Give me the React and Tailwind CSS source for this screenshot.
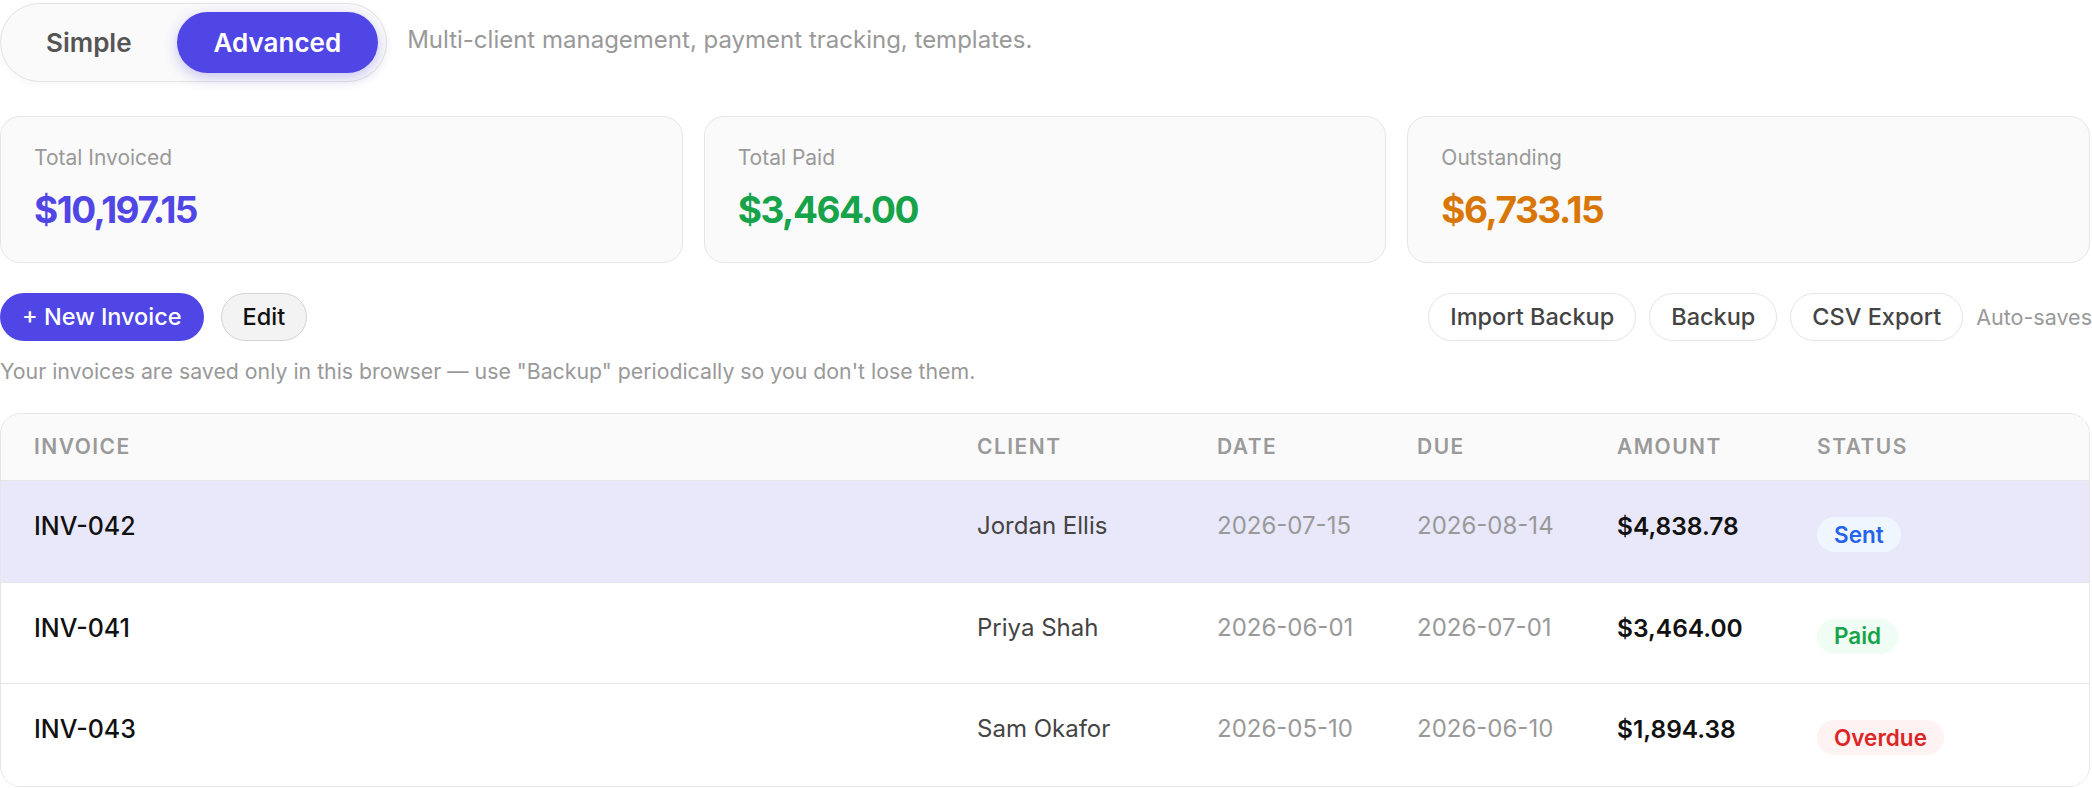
const invoices = [
  { id: 'INV-042', client: 'Jordan Ellis', date: '2026-07-15', due: '2026-08-14', amount: '$4,838.78', status: 'Sent', active: true },
  { id: 'INV-041', client: 'Priya Shah', date: '2026-06-01', due: '2026-07-01', amount: '$3,464.00', status: 'Paid' },
  { id: 'INV-043', client: 'Sam Okafor', date: '2026-05-10', due: '2026-06-10', amount: '$1,894.38', status: 'Overdue' },
]

const badgeStyles = {
  Sent: 'bg-[#eff6ff] text-[#2563eb]',
  Paid: 'bg-[#f0fdf4] text-[#16a34a]',
  Overdue: 'bg-[#fef2f2] text-[#dc2626]',
}

const StatCard = ({ label, value, color }) => (
  <div className="h-[147px] rounded-[20px] border-[1.5px] border-[#e6e6e6] bg-[#fafafa] px-[33px] pt-[25px]">
    <div className="text-[21px] leading-[32px] text-[#999]">{label}</div>
    <div className={`mt-[14px] text-[37px] leading-[44px] font-bold tracking-[-0.04em] ${color}`}>{value}</div>
  </div>
)

const App = () => {
  return (
    <div className="w-[2092px] h-[788px] overflow-hidden bg-white font-['Inter',sans-serif]">
      {/* Mode toggle */}
      <div className="flex items-center gap-[20px] pt-[3px]">
        <div className="flex gap-[8px] rounded-full border-[1.5px] border-[#e3e3e3] bg-[#fafafa] p-[8px] shadow-[0_2px_8px_rgba(0,0,0,0.04)]">
          <button className="h-[61px] rounded-full px-[37px] text-[26px] font-semibold text-[#555]">Simple</button>
          <button className="h-[61px] rounded-full bg-[#4f46e5] px-[37px] text-[26px] font-semibold text-white shadow-[0_4px_14px_rgba(79,70,229,0.3)]">
            Advanced
          </button>
        </div>
        <p className="text-[24px] text-[#999] -mt-[6px]">Multi-client management, payment tracking, templates.</p>
      </div>

      {/* Totals */}
      <div className="mt-[34px] grid grid-cols-3 gap-[21px] pr-[2px]">
        <StatCard label="Total Invoiced" value="$10,197.15" color="text-[#4f46e5]" />
        <StatCard label="Total Paid" value="$3,464.00" color="text-[#16a34a]" />
        <StatCard label="Outstanding" value="$6,733.15" color="text-[#d97706]" />
      </div>

      {/* Actions */}
      <div className="mt-[30px] flex items-center justify-between">
        <div className="flex gap-[17px]">
          <button className="h-[48px] rounded-full bg-[#4f46e5] px-[22px] text-[23.5px] font-medium text-white">+ New Invoice</button>
          <button className="h-[48px] rounded-full border-[1.5px] border-[#d4d4d4] bg-[#f3f3f3] px-[21px] text-[23.5px] font-medium text-[#111]">
            Edit
          </button>
        </div>
        <div className="flex items-center gap-[13px]">
          <button className="h-[48px] rounded-full border-[1.5px] border-[#e5e5e5] bg-white px-[21px] text-[23.5px] font-medium text-[#444]">
            Import Backup
          </button>
          <button className="h-[48px] rounded-full border-[1.5px] border-[#e5e5e5] bg-white px-[21px] text-[23.5px] font-medium text-[#444]">
            Backup
          </button>
          <button className="h-[48px] rounded-full border-[1.5px] border-[#e5e5e5] bg-white px-[21px] text-[23.5px] font-medium text-[#444]">
            CSV Export
          </button>
          <span className="whitespace-nowrap text-[21.5px] text-[#999]">Auto-saves</span>
        </div>
      </div>

      <p className="mt-[15px] text-[21.3px] leading-[30px] text-[#999]">
        Your invoices are saved only in this browser — use "Backup" periodically so you don't lose them.
      </p>

      {/* Invoice table */}
      <div className="mt-[27px] mr-[2px] overflow-hidden rounded-[21px] border-[1.5px] border-[#e6e6e6]">
        <div className="grid h-[67px] grid-cols-[943px_240px_200px_200px_200px_1fr] items-center border-b-[1.5px] border-[#e6e6e6] bg-[#fafafa] pl-[33px] text-[21px] font-semibold uppercase tracking-[0.07em] text-[#9a9a9a]">
          <div>Invoice</div>
          <div>Client</div>
          <div>Date</div>
          <div>Due</div>
          <div>Amount</div>
          <div>Status</div>
        </div>
        {invoices.map((inv, i) => (
          <div
            key={inv.id}
            className={`grid h-[101.5px] grid-cols-[943px_240px_200px_200px_200px_1fr] items-start pl-[33px] pt-[28px] ${
              inv.active ? 'bg-[#e9e8fa]' : 'bg-white'
            } ${i < invoices.length - 1 ? 'border-b-[1.5px] border-[#e6e6e6]' : ''}`}
          >
            <div className="text-[25px] leading-[34px] font-medium text-[#111]">{inv.id}</div>
            <div className="text-[24px] leading-[34px] text-[#444]">{inv.client}</div>
            <div className="text-[24px] leading-[34px] text-[#999]">{inv.date}</div>
            <div className="text-[24px] leading-[34px] text-[#999]">{inv.due}</div>
            <div className="text-[24.5px] leading-[34px] font-semibold text-[#111]">{inv.amount}</div>
            <div className="pt-[8px]">
              <span className={`inline-flex h-[35px] items-center rounded-full px-[17px] text-[22.5px] font-semibold ${badgeStyles[inv.status]}`}>
                {inv.status}
              </span>
            </div>
          </div>
        ))}
      </div>
    </div>
  )
}

export default App
